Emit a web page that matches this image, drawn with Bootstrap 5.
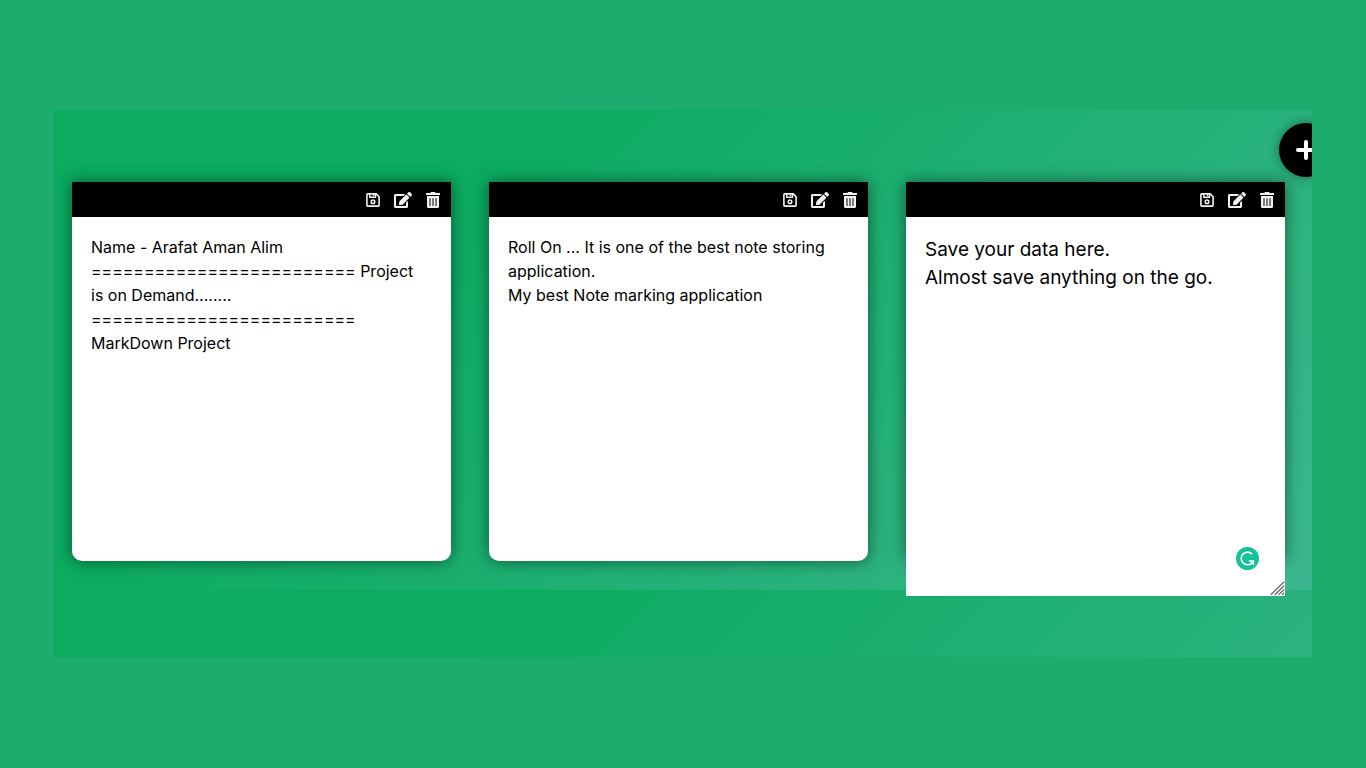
<!DOCTYPE html>
<html lang="en">
<head>
<meta charset="utf-8">
<meta name="viewport" content="width=device-width, initial-scale=1">
<title>Notes</title>
<link rel="stylesheet" href="https://cdn.jsdelivr.net/npm/bootstrap@5.3.0/dist/css/bootstrap.min.css">
<style>
  body { background: #1dab6e; font-family: Inter, sans-serif; font-variant-ligatures: no-contextual; color: #000; padding: 110px 54px; }
  .board {
    min-height: 547px;
    padding: 72px 27px 61px 18px;
    gap: 38px;
    background: linear-gradient(135deg, #0bab60 28%, #3cb68f 100%) 0 0 / 100% 480px repeat-y;
  }
  .note {
    flex: 1 1 0;
    min-width: 0;
    min-height: 0;
    aspect-ratio: 1;
    border-radius: 0 0 10px 10px;
    box-shadow: 0 0 16px rgba(0, 0, 0, .5);
  }
  .note-bar { height: 35px; gap: 14px; padding-right: 11px; background: #000; }
  .note-bar .btn { --bs-btn-color: #f2f2f2; --bs-btn-hover-color: #fff; line-height: 1; }
  .note-text { padding: 18px 19px; font-size: 16px; line-height: 24px; }
  .note-edit { padding: 19px; font-size: 19px; line-height: 28px; aspect-ratio: 1; resize: none; outline: 0; color: #000; }
  .add-btn { width: 54px; height: 54px; top: 13px; right: -21px; box-shadow: 0 0 12px rgba(0, 0, 0, .4); }
  .helper { right: 26px; bottom: 26px; }
  .grip { right: 0; bottom: 0; }
</style>
</head>
<body>
<svg class="d-none" aria-hidden="true">
  <symbol id="i-save" viewBox="0 0 14 14">
    <path d="M1.8.9h8.4l2.9 2.9v8.4a.9.9 0 0 1-.9.9H1.8a.9.9 0 0 1-.9-.9V1.8a.9.9 0 0 1 .9-.9z" fill="none" stroke="currentColor" stroke-width="1.6"/>
    <path d="M3.8 1v3.3h5.7V1M7.5 1.5v1.6" fill="none" stroke="currentColor" stroke-width="1.4"/>
    <circle cx="7" cy="8.8" r="1.8" fill="none" stroke="currentColor" stroke-width="1.5"/>
  </symbol>
  <symbol id="i-edit" viewBox="0 0 576 512">
    <path fill="currentColor" d="M402.6 83.2l90.2 90.2c3.8 3.8 3.8 10 0 13.8L274.4 405.6l-92.8 10.3c-12.4 1.4-22.9-9.1-21.5-21.5l10.3-92.8L388.8 83.2c3.8-3.8 10-3.8 13.8 0zm162-22.9l-48.8-48.8c-15.2-15.2-39.9-15.2-55.2 0l-35.4 35.4c-3.8 3.8-3.8 10 0 13.8l90.2 90.2c3.8 3.8 10 3.8 13.8 0l35.4-35.4c15.2-15.3 15.2-40 0-55.2zM384 346.2V448H64V128h229.8c3.2 0 6.2-1.3 8.5-3.5l40-40c7.6-7.6 2.2-20.5-8.5-20.5H48C21.5 64 0 85.5 0 112v352c0 26.5 21.5 48 48 48h352c26.5 0 48-21.5 48-48V306.2c0-10.7-12.9-16-20.5-8.5l-40 40c-2.2 2.3-3.5 5.3-3.5 8.5z"/>
  </symbol>
  <symbol id="i-trash" viewBox="0 0 448 512">
    <path fill="currentColor" d="M32 464a48 48 0 0 0 48 48h288a48 48 0 0 0 48-48V128H32zm272-256a16 16 0 0 1 32 0v224a16 16 0 0 1-32 0zm-96 0a16 16 0 0 1 32 0v224a16 16 0 0 1-32 0zm-96 0a16 16 0 0 1 32 0v224a16 16 0 0 1-32 0zM432 32H312l-9.4-18.7A24 24 0 0 0 281.1 0H166.8a23.72 23.72 0 0 0-21.4 13.3L136 32H16A16 16 0 0 0 0 48v32a16 16 0 0 0 16 16h416a16 16 0 0 0 16-16V48a16 16 0 0 0-16-16z"/>
  </symbol>
</svg>

<main class="board position-relative overflow-hidden d-flex align-items-start">
  <button type="button" class="add-btn btn p-0 border-0 rounded-circle text-bg-dark bg-black position-absolute d-flex align-items-center justify-content-center" aria-label="Add note">
    <svg width="20" height="20" viewBox="0 0 20 20"><path d="M10 2v16M2 10h16" stroke="#fff" stroke-width="4" stroke-linecap="round"/></svg>
  </button>

  <article class="note bg-white">
    <div class="note-bar d-flex align-items-center justify-content-end">
      <button type="button" class="btn p-0 border-0 d-flex" aria-label="Save"><svg width="14" height="14"><use href="#i-save"/></svg></button>
      <button type="button" class="btn p-0 border-0 d-flex" aria-label="Edit"><svg width="18" height="16"><use href="#i-edit"/></svg></button>
      <button type="button" class="btn p-0 border-0 d-flex" aria-label="Delete"><svg width="14" height="16"><use href="#i-trash"/></svg></button>
    </div>
    <div class="note-text">Name - Arafat Aman Alim<br>========================= Project<br>is on Demand........<br>=========================<br>MarkDown Project</div>
  </article>

  <article class="note bg-white">
    <div class="note-bar d-flex align-items-center justify-content-end">
      <button type="button" class="btn p-0 border-0 d-flex" aria-label="Save"><svg width="14" height="14"><use href="#i-save"/></svg></button>
      <button type="button" class="btn p-0 border-0 d-flex" aria-label="Edit"><svg width="18" height="16"><use href="#i-edit"/></svg></button>
      <button type="button" class="btn p-0 border-0 d-flex" aria-label="Delete"><svg width="14" height="16"><use href="#i-trash"/></svg></button>
    </div>
    <div class="note-text">Roll On ... It is one of the best note storing<br>application.<br>My best Note marking application</div>
  </article>

  <article class="note bg-white">
    <div class="note-bar d-flex align-items-center justify-content-end">
      <button type="button" class="btn p-0 border-0 d-flex" aria-label="Save"><svg width="14" height="14"><use href="#i-save"/></svg></button>
      <button type="button" class="btn p-0 border-0 d-flex" aria-label="Edit"><svg width="18" height="16"><use href="#i-edit"/></svg></button>
      <button type="button" class="btn p-0 border-0 d-flex" aria-label="Delete"><svg width="14" height="16"><use href="#i-trash"/></svg></button>
    </div>
    <div class="position-relative">
      <textarea class="note-edit d-block w-100 border-0 bg-white" aria-label="Note text" spellcheck="false">Save your data here.
Almost save anything on the go.</textarea>
      <svg class="helper position-absolute" width="23" height="23" viewBox="0 0 23 23" aria-hidden="true">
        <circle cx="11.5" cy="11.5" r="11.5" fill="#15c39a"/>
        <path d="M16.2 7.2A6.3 6.3 0 1 0 15.500 16.300L17 14.500M12.800 14h4.500v4" fill="none" stroke="#fff" stroke-width="1.600"/>
      </svg>
      <svg class="grip position-absolute" width="15" height="15" viewBox="0 0 15 15" aria-hidden="true">
        <path d="M.8 13.800L14.200.8M4.800 13.800L14.200 4.800M8.500 13.800L14.200 8.500M12 13.800l2.200-2" fill="none" stroke="#666" stroke-width="1.200"/>
      </svg>
    </div>
  </article>
</main>
<script src="https://cdn.jsdelivr.net/npm/bootstrap@5.3.0/dist/js/bootstrap.bundle.min.js"></script>
</body>
</html>
